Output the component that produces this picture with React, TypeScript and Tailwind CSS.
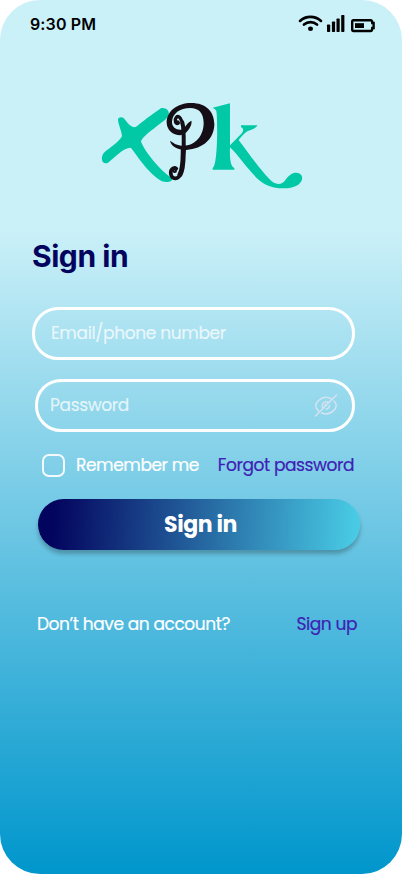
import React from "react";

function StatusBar() {
  return (
    <header className="flex h-12 items-center justify-between pl-[30px] pr-[25px] text-black">
      <span className="font-['Inter'] text-[16px] font-semibold leading-5 tracking-[0.12px]">9:30 PM</span>
      <svg width="79" height="20" viewBox="0 0 79 20" fill="none">
        <g stroke="currentColor" strokeWidth="2.7" strokeLinecap="round">
          <path d="M2 6.9C8 1.4 17 1.4 23 6.9" />
          <path d="M6 10.6C9.8 7.2 15.2 7.2 19 10.6" />
        </g>
        <ellipse cx="12.5" cy="14.8" rx="2.5" ry="2.2" fill="currentColor" />
        <g fill="currentColor">
          <rect x="29" y="10.5" width="3.2" height="7.5" rx="0.7" />
          <rect x="33.9" y="7.5" width="3.2" height="10.5" rx="0.7" />
          <rect x="38.5" y="4.5" width="3.2" height="13.5" rx="0.7" />
          <rect x="43.2" y="1" width="3.2" height="17" rx="0.7" />
        </g>
        <path d="M55.5 6.2H72.5Q74.3 6.2 74.3 9H75.6V14H74.3Q74.3 17 72.5 17H55.5Q54.2 17 54.2 15.5V7.7Q54.2 6.2 55.5 6.2Z" stroke="currentColor" strokeWidth="2.4" />
        <rect x="57" y="9.2" width="9" height="4.8" fill="currentColor" />
      </svg>
    </header>
  );
}

function Logo() {
  return (
    <svg className="ml-[95px] mt-[47px] block" width="220" height="100" viewBox="0 0 660 300" fill="none">
      <path
        fill="#02C9A5"
        d="M26 174C16 188 20 210 38 204C54 192 84 158 107 158C125 177 153 230 201 259C215 264 236 260 231 250C191 222 150 170 138 140C143 118 212 79 221 62C225 46 213 37 199 39C171 57 137 85 122 96C108 99 98 84 86 69C77 64 68 68 69 76C72 96 80 108 81 124C69 144 42 159 26 174Z"
      />
      <g transform="translate(195 6)">
        <path
          fill="#160E17"
          d="M61 115C38 114 21 99 20 77C20 42 52 18 94 18C137 18 163 43 163 82C162 126 130 155 79 159C56 158 34 151 30 131C39 137 49 145 66 146C105 148 131 117 131 78C131 47 115 33 91 33C59 33 37 50 36 75C36 90 48 99 63 98C77 95 76 80 94 71C98 79 87 109 61 115Z"
        />
        <g stroke="#160E17" strokeLinecap="round" strokeLinejoin="round">
          <path strokeWidth="10" d="M55 78C46 84 43 68 49 61C57 52 66 69 68 84" />
          <path strokeWidth="12" d="M67 77C73 98 71 133 71 164" />
          <path strokeWidth="15" d="M70 154C69 184 71 213 60 233" />
          <path strokeWidth="11" d="M62 230C55 248 37 249 33 233C29 217 42 209 49 215" />
          <circle cx="44" cy="221" r="4" strokeWidth="6" />
          <circle cx="53" cy="75" r="3" strokeWidth="5" />
        </g>
      </g>
      <g transform="translate(315 0)" fill="#02C9A5">
        <path d="M38 38L90 25V151L124 116Q136 103 123 96V91H173Q165 103 146 107Q134 111 116 135C140 166 178 222 209 253C224 271 246 271 256 255C268 237 284 229 297 235C311 242 309 258 295 269C274 284 226 283 198 269C158 249 125 190 90 157C89 184 90 215 103 219V224H38V219C54 212 53 68 49 48Q47 42 38 38Z" />
      </g>
    </svg>
  );
}

function EyeOff() {
  return (
    <svg width="24" height="24" viewBox="0 0 24 24" fill="none" stroke="#D4E3F0" strokeWidth="1.5" strokeLinecap="round" strokeLinejoin="round">
      <path d="M1.5 22L22.5 1" />
      <path d="M4.6 17.1C.8 13.6.8 9.7 4.6 6.5C8.4 3.1 13.4 2.6 17.4 4.8" />
      <path d="M20 7C23 10 23 13.6 19.6 16.6C16 20 11.7 20.6 7.5 19" />
      <path d="M9 14.2C6.5 10.5 10.5 6 14.7 8.5M15.6 11.7C15.3 13.5 14.1 14.8 12.2 15.1M12 10.3L10.9 11.7" />
    </svg>
  );
}

export default function App() {
  return (
    <main className="h-[874px] w-[402px] overflow-hidden rounded-[40px] bg-[linear-gradient(180deg,#CAF0F8_0%,#CAF0F8_26.5%,#0096CC_100%)] font-['Poppins','Inter',sans-serif]">
      <StatusBar />
      <Logo />
      <h1 className="ml-8 mt-[43px] font-['Inter'] text-[30px] font-bold leading-9 tracking-[-0.45px] text-[#03045E]">Sign in</h1>

      <form className="mt-[33px]" onSubmit={(event) => event.preventDefault()}>
        <div className="ml-8 flex h-[53px] w-[323px] items-center rounded-[26px] border-3 border-white px-4">
          <input
            aria-label="Email or phone number"
            placeholder="Email/phone number"
            className="w-full bg-transparent text-[17px] tracking-[-0.35px] text-white outline-none [-webkit-text-stroke:0.15px] placeholder:text-white/75"
          />
        </div>
        <div className="ml-[35px] mt-[19px] flex h-[53px] w-80 items-center rounded-[26px] border-3 border-white pl-3 pr-[14px]">
          <input
            type="password"
            aria-label="Password"
            placeholder="Password"
            className="min-w-0 flex-1 bg-transparent text-[17px] tracking-[-0.35px] text-white outline-none [-webkit-text-stroke:0.15px] placeholder:text-white/75"
          />
          <button type="button" aria-label="Show password"><EyeOff /></button>
        </div>

        <div className="ml-[42px] mt-[19px] flex h-7 w-[312px] items-center">
          <label className="flex items-center gap-[11px] text-[17px] leading-7 tracking-[-0.408px] text-white">
            <input type="checkbox" className="size-[23px] appearance-none rounded-[7px] border-2 border-white/90 checked:bg-white" />
            <span className="whitespace-nowrap [-webkit-text-stroke:0.2px]">Remember me</span>
          </label>
          <a href="#forgot" className="ml-auto whitespace-nowrap text-[17px] leading-7 tracking-[-0.408px] text-[#3F20B4] [-webkit-text-stroke:0.2px]">Forgot password</a>
        </div>

        <button type="submit" className="ml-[38px] mt-5 flex h-[51px] w-[322px] items-center justify-center rounded-full bg-[linear-gradient(93deg,#03045E_5%,#48CAE4_98%)] pl-[3px] text-[22px] font-bold tracking-[-0.4px] text-white shadow-[0_4px_4px_rgba(0,0,0,0.25)]">
          <span>Sign in</span>
        </button>
      </form>

      <footer className="ml-[37px] mt-[60px] flex h-7 w-80 items-center justify-between text-[17px] leading-7 tracking-[-0.408px] [-webkit-text-stroke:0.2px]">
        <span className="text-white">Don’t have an account?</span>
        <a href="#signup" className="text-[#3F20B4]">Sign up</a>
      </footer>
    </main>
  );
}
